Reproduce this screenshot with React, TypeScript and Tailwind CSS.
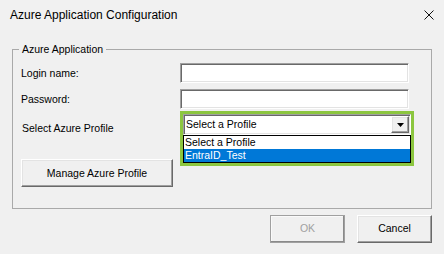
import React from "react";

const sunken =
  "border border-t-[#a0a0a0] border-l-[#a0a0a0] border-b-white border-r-white shadow-[inset_1px_1px_0_#696969,inset_-1px_-1px_0_#e3e3e3] bg-white";
const raised =
  "border border-t-white border-l-white border-b-[#696969] border-r-[#696969] shadow-[inset_-1px_-1px_0_#a0a0a0,inset_1px_1px_0_#e3e3e3] bg-[#f0f0f0]";

export default function App() {
  return (
    <div className="w-[444px] h-[254px] bg-[#f0f0f0] flex flex-col font-['Liberation_Sans',Arial,sans-serif] text-black overflow-hidden">
      {/* Title bar */}
      <div className="h-[30px] flex items-center justify-between pl-[10px] pr-[10px] bg-[#f1f1f1]">
        <span className="text-[12px] leading-[14px]">Azure Application Configuration</span>
        <svg width="10" height="10" viewBox="0 0 10 10">
          <path d="M0.5 0.5 L9.5 9.5 M9.5 0.5 L0.5 9.5" stroke="#111" strokeWidth="1" fill="none" />
        </svg>
      </div>

      {/* Group box */}
      <div className="relative mt-[19px] ml-[12px] w-[420px] h-[160px] border border-[#a9a9a9] pt-[13px] pl-[8px] text-[10.5px] leading-[13px]">
        <span className="absolute -top-[7px] left-[6px] px-[3px] bg-[#f0f0f0] leading-[13px]">Azure Application</span>

        <div className="flex items-center h-[20px]">
          <span className="w-[159px]">Login name:</span>
          <div className={`w-[229px] h-[20px] ${sunken}`} />
        </div>

        <div className="flex items-center h-[20px] mt-[6px]">
          <span className="w-[159px]">Password:</span>
          <div className={`w-[229px] h-[20px] ${sunken}`} />
        </div>

        <div className="flex items-start h-[21px] mt-[5px]">
          <span className="w-[159px] mt-[8px] pl-[1px]">Select Azure Profile</span>
          <div className="relative ml-[3px] w-[228px] h-[21px]">
            <div className={`w-full h-full flex items-center justify-between pl-[1px] pr-[1px] ${sunken}`}>
              <span className="pl-[1px]">Select a Profile</span>
              <div className={`w-[18px] h-[17px] flex items-center justify-center ${raised}`}>
                <svg width="7" height="4" viewBox="0 0 7 4">
                  <path d="M0 0 H7 L3.5 4 Z" fill="#000" />
                </svg>
              </div>
            </div>
            {/* Dropdown list */}
            <div className="absolute left-0 top-full w-full h-[28px] border border-black bg-white flex flex-col">
              <div className="h-[13px] pl-[1px] leading-[13px]">Select a Profile</div>
              <div className="h-[13px] pl-[1px] leading-[13px] bg-[#0078d7] text-white">EntraID_Test</div>
            </div>
            {/* Highlight frame */}
            <div className="absolute -left-[3px] -top-[3px] w-[234px] h-[55px] border-[3px] border-[#8cc63f] pointer-events-none" />
          </div>
        </div>

        <button
          className={`mt-[24px] w-[152px] h-[28px] flex items-center justify-center text-[10.5px] ${raised}`}
        >
          Manage Azure Profile
        </button>
      </div>

      {/* Bottom buttons */}
      <div className="flex justify-end gap-[12px] mt-[6px] pr-[12px] text-[10.5px]">
        <button className="w-[75px] h-[28px] flex items-center justify-center border border-[#a0a0a0] shadow-[inset_-1px_-1px_0_#8a8a8a,inset_1px_1px_0_#fafafa] bg-[#f0f0f0] text-[#a0a0a0]">
          OK
        </button>
        <button className={`w-[75px] h-[28px] flex items-center justify-center ${raised}`}>
          Cancel
        </button>
      </div>
    </div>
  );
}
